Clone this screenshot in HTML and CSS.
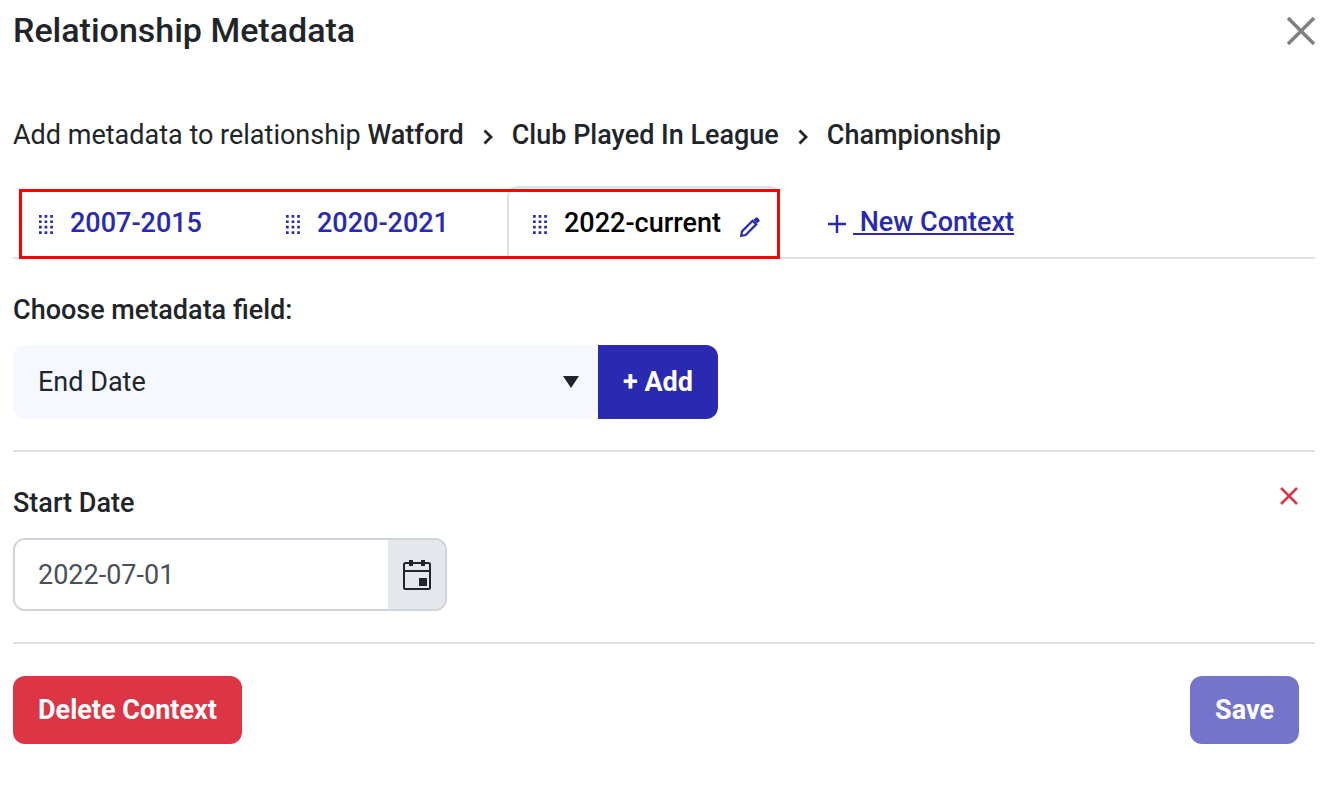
FILE: index.html
```
<!DOCTYPE html>
<html lang="en">
<head>
    <meta charset="UTF-8">
    <meta name="viewport" content="width=device-width, initial-scale=1.0">
    <title>Relationship Metadata</title>
    <link rel="stylesheet" href="styles.css">
</head>
<body>
    <!-- shared icons -->
    <svg class="defs" width="0" height="0" aria-hidden="true">
        <symbol id="grip" viewBox="0 0 14 19">
            <path d="M0 0h2.700v2.700H0zM5.600 0h2.700v2.700H5.600zM11.200 0h2.700v2.700h-2.700zM0 5.400h2.700v2.700H0zM5.600 5.400h2.700v2.700H5.600zM11.200 5.400h2.700v2.700h-2.700zM0 10.800h2.700v2.700H0zM5.600 10.800h2.700v2.700H5.600zM11.200 10.800h2.700v2.700h-2.700zM0 16.200h2.700v2.700H0zM5.600 16.200h2.700v2.700H5.600zM11.200 16.200h2.700v2.700h-2.700z"/>
        </symbol>
        <symbol id="chevron" viewBox="0 0 10 16">
            <path d="M1.500 1.500L8 8l-6.500 6.500" fill="none" stroke="currentColor" stroke-width="2.8"/>
        </symbol>
    </svg>

    <header class="header">
        <h1>Relationship Metadata</h1>
        <button type="button" class="icon-button close" aria-label="Close">
            <svg width="28" height="28" viewBox="0 0 28 28"><path d="M1 1l26 26M27 1L1 27"/></svg>
        </button>
    </header>

    <main>
        <p class="path">
            <span>Add metadata to relationship <b>Watford</b></span>
            <svg width="10" height="16"><use href="#chevron"/></svg>
            <b>Club Played In League</b>
            <svg width="10" height="16"><use href="#chevron"/></svg>
            <b>Championship</b>
        </p>

        <nav class="contexts">
            <div class="tabs">
                <a href="#" class="tab"><svg class="grip"><use href="#grip"/></svg>2007-2015</a>
                <a href="#" class="tab"><svg class="grip"><use href="#grip"/></svg>2020-2021</a>
                <a href="#" class="tab active" aria-current="true">
                    <svg class="grip"><use href="#grip"/></svg>2022-current
                    <svg class="pencil" viewBox="0 0 20 20">
                        <path d="M1.200 18.800l.8-4.400L12.600 3.800l3.600 3.600L5.600 18z" fill="none" stroke="currentColor" stroke-width="2.200"/>
                        <path d="M13.400 3L15.600.8q1-1 2 0l1.600 1.600q1 1 0 2L17 6.600z"/>
                    </svg>
                </a>
            </div>
            <a href="#" class="new-context">
                <svg width="18" height="18" viewBox="0 0 18 18"><path d="M9 0v18M0 9h18"/></svg>
                <span>&nbsp;New Context</span>
            </a>
        </nav>

        <section class="field">
            <label for="field">Choose metadata field:</label>
            <div class="picker">
                <div class="select">
                    <select id="field">
                        <option>End Date</option>
                    </select>
                    <svg width="16" height="12" viewBox="0 0 16 12"><path d="M0 0h16L8 12z"/></svg>
                </div>
                <button type="button" class="button add">+ Add</button>
            </div>
        </section>

        <section class="field value">
            <div class="column">
                <label for="start">Start Date</label>
                <div class="date">
                    <input id="start" type="text" value="2022-07-01">
                    <button type="button" class="calendar" aria-label="Open calendar">
                        <svg width="28" height="30" viewBox="0 0 28 30">
                            <rect x="1" y="3" width="26" height="26" rx="1.5" fill="none" stroke="currentColor" stroke-width="2"/>
                            <path d="M1 10h26v2H1zM6 0h4v6H6zM18 0h4v6h-4zM16 18h8v8h-8z"/>
                        </svg>
                    </button>
                </div>
            </div>
            <button type="button" class="icon-button remove" aria-label="Remove Start Date">
                <svg width="18" height="18" viewBox="0 0 18 18"><path d="M1 1l16 16M17 1L1 17"/></svg>
            </button>
        </section>
    </main>

    <footer class="footer">
        <button type="button" class="button delete">Delete Context</button>
        <button type="button" class="button save">Save</button>
    </footer>
</body>
</html>
```

FILE: styles.css
```
* {
    box-sizing: border-box;
}

body {
    margin: 0;
    padding: 10px 25px 10px 13px;
    font-family: Roboto, sans-serif;
    font-size: 27px;
    line-height: 34px;
    color: #212529;
    background-color: white;
}

h1 {
    margin: 0;
    font-size: 34px;
    line-height: 40px;
    font-weight: 500;
}

b, label {
    font-weight: 500;
}

svg {
    fill: currentColor;
    flex: none;
}

.defs {
    position: absolute;
}

button, input, select {
    font: inherit;
    border: 0;
    margin: 0;
}

button {
    cursor: pointer;
}

.header {
    display: flex;
    justify-content: space-between;
    align-items: flex-start;
}

.icon-button {
    display: flex;
    padding: 0;
    background: none;
}

.icon-button svg {
    overflow: visible;
    stroke: currentColor;
}

.close {
    margin-top: 7px;
    color: #7f7f7f;
    stroke-width: 3.5;
}

.remove {
    margin: 1px 17px 0 0;
    color: #dc3545;
    stroke-width: 2.5;
}

.path {
    display: flex;
    align-items: center;
    gap: 19px;
    margin: 68px 0 34px;
}

.path svg {
    margin-top: 4px;
}

/* context tabs */
.contexts {
    display: flex;
    align-items: center;
    gap: 48px;
    border-bottom: 2px solid #dee2e6;
}

.tabs {
    display: flex;
    position: relative;
    margin-bottom: -2px;
}

.tabs::after {
    content: '';
    position: absolute;
    inset: 3px 0 0 6px;
    border: 3px solid #ff0000;
    pointer-events: none;
}

.tab {
    display: flex;
    align-items: center;
    width: 247px;
    height: 73px;
    padding: 0 18px 0 24px;
    border: 2px solid transparent;
    font-weight: 500;
    color: #2a2ab0;
    text-decoration: none;
}

.tab.active {
    width: 273px;
    color: #000;
    background-color: white;
    border-color: #dee2e6;
    border-bottom-color: white;
    border-radius: 10px 10px 0 0;
}

.grip {
    width: 14px;
    height: 19px;
    margin: 4px 17px 0 0;
    color: #2a2ab0;
}

.pencil {
    width: 20px;
    height: 20px;
    margin: 8px 0 0 auto;
    color: #2a2ab0;
}

.new-context {
    display: flex;
    align-items: center;
    gap: 7px;
    font-weight: 500;
    color: #2a2ab0;
    text-decoration: none;
}

.new-context span {
    text-decoration: underline;
}

.new-context svg {
    margin-top: 4px;
    stroke: currentColor;
    stroke-width: 2.5;
}

/* metadata fields */
.field {
    padding: 34px 0 31px;
    border-bottom: 2px solid #dee2e6;
}

.field label {
    display: block;
    margin-bottom: 18px;
}

.picker {
    display: flex;
    width: 705px;
    max-width: 100%;
}

.select {
    flex: 1;
    position: relative;
}

.select select {
    appearance: none;
    width: 100%;
    height: 74px;
    padding: 0 60px 0 25px;
    color: inherit;
    background-color: #f5f9ff;
    border-radius: 12px;
}

.select svg {
    position: absolute;
    right: 19px;
    top: 31px;
    pointer-events: none;
}

.button {
    height: 68px;
    padding: 0 25px;
    font-weight: 700;
    color: white;
    border-radius: 12px;
}

.add {
    height: 74px;
    background-color: #2a2ab0;
    border-radius: 0 12px 12px 0;
}

.value {
    display: flex;
    justify-content: space-between;
    align-items: flex-start;
}

.date {
    display: flex;
    width: 434px;
    max-width: 100%;
    height: 73px;
    border: 2px solid #ced4da;
    border-radius: 12px;
    overflow: hidden;
}

.date input {
    flex: 1;
    min-width: 0;
    padding: 0 23px;
    color: #495057;
}

.calendar {
    display: flex;
    align-items: center;
    justify-content: center;
    width: 57px;
    padding: 0;
    color: #212529;
    background-color: #e4e7eb;
}

.footer {
    display: flex;
    justify-content: space-between;
    padding: 32px 16px 0 0;
}

.delete {
    background-color: #dc3545;
}

.save {
    background-color: #7574cc;
}
```
